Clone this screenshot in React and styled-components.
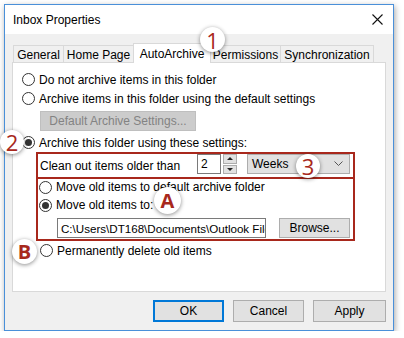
import React from "react"
import styled, { createGlobalStyle } from "styled-components"

const GlobalStyle = createGlobalStyle`
  html, body {
    margin: 0;
    padding: 0;
    background: #ffffff;
  }
  body {
    font-family: "Liberation Sans", Arial, sans-serif;
    font-size: 12px;
    color: #000;
  }
`

const RED = "#a8281c"

const Page = styled.div`
  padding: 4px 0 0 4px;
`

const Window = styled.div`
  position: relative;
  width: 388px;
  height: 325px;
  border: 1px solid #4a90d9;
  display: flex;
  flex-direction: column;
  box-shadow: 1px 2px 6px rgba(0, 0, 0, 0.35);
  background: #f0f0f0;
`

const TitleBar = styled.div`
  height: 29px;
  flex: none;
  background: #fff;
  display: flex;
  align-items: center;
  justify-content: space-between;
  padding: 0 10px 0 8px;
  font-size: 12px;
`

const CloseIcon = styled.svg`
  width: 11px;
  height: 11px;
  margin-top: -1px;
`

const Body = styled.div`
  flex: 1;
  display: flex;
  flex-direction: column;
  padding: 8px 7px 0 7px;
`

const TabStrip = styled.div`
  height: 20px;
  display: flex;
  align-items: flex-end;
  padding-left: 1px;
  position: relative;
  z-index: 1;
`

const Tab = styled.div`
  height: ${(p) => (p.$active ? "20px" : "17px")};
  margin-bottom: ${(p) => (p.$active ? "-1px" : "0")};
  width: ${(p) => p.$w}px;
  box-sizing: border-box;
  border: 1px solid #d9d9d9;
  border-bottom: none;
  margin-right: -1px;
  background: ${(p) => (p.$active ? "#fff" : "#f0f0f0")};
  display: flex;
  align-items: center;
  justify-content: center;
  padding-top: ${(p) => (p.$active ? "0" : "1px")};
`

const Panel = styled.div`
  height: 230px;
  box-sizing: border-box;
  background: #fff;
  border: 1px solid #d9d9d9;
  padding: 7px 0 0 9px;
  display: flex;
  flex-direction: column;
`

const RadioRow = styled.label`
  height: ${(p) => p.$h || 19}px;
  display: flex;
  align-items: center;
  gap: 4px;
  margin-left: ${(p) => p.$indent || 0}px;
`

const Radio = styled.span`
  width: 11px;
  height: 11px;
  border: 1px solid #333;
  border-radius: 50%;
  background: #fff;
  display: flex;
  align-items: center;
  justify-content: center;
  flex: none;

  &::after {
    content: "";
    display: ${(p) => (p.$checked ? "block" : "none")};
    width: 7px;
    height: 7px;
    border-radius: 50%;
    background: #333;
  }
`

const DisabledButton = styled.div`
  width: 156px;
  height: 20px;
  box-sizing: border-box;
  margin: 3px 0 2px 18px;
  background: #cccccc;
  border: 1px solid #bfbfbf;
  color: #838383;
  display: flex;
  align-items: center;
  justify-content: center;
`

const Group = styled.div`
  width: 319px;
  box-sizing: border-box;
  margin-left: 14px;
  border: 2px solid ${RED};
  margin-top: ${(p) => (p.$joined ? "-2px" : "0")};
`

const CleanRow = styled.div`
  height: 23px;
  display: flex;
  align-items: center;
  padding: 0 3px 0 2px;
`

const CleanLabel = styled.span`
  width: 157px;
`

const NumberBox = styled.div`
  width: 24px;
  height: 20px;
  box-sizing: border-box;
  border: 1px solid #7a7a7a;
  display: flex;
  align-items: center;
  padding-left: 3px;
  margin-top: -3px;
`

const Spinner = styled.div`
  width: 14px;
  height: 20px;
  margin: -3px 10px 0 2px;
  display: flex;
  flex-direction: column;
  gap: 1px;
`

const SpinBtn = styled.div`
  flex: 1;
  background: #e1e1e1;
  border: 1px solid #adadad;
  display: flex;
  align-items: center;
  justify-content: center;
`

const Triangle = styled.span`
  width: 0;
  height: 0;
  border-left: 3px solid transparent;
  border-right: 3px solid transparent;
  ${(p) =>
    p.$up ? "border-bottom: 3px solid #222;" : "border-top: 3px solid #222;"}
`

const Dropdown = styled.div`
  width: 103px;
  height: 20px;
  margin-top: -3px;
  box-sizing: border-box;
  background: #e1e1e1;
  border: 1px solid #adadad;
  display: flex;
  align-items: center;
  justify-content: space-between;
  padding: 0 6px 0 4px;
`

const MoveGroupBody = styled.div`
  padding: 0 3px 1px 1px;
  display: flex;
  flex-direction: column;
`

const PathRow = styled.div`
  display: flex;
  align-items: center;
  justify-content: space-between;
  padding-left: 18px;
  margin-top: 3px;
`

const PathBox = styled.div`
  width: 209px;
  height: 20px;
  box-sizing: border-box;
  border: 1px solid #7a7a7a;
  padding: 0 0 0 3px;
  display: flex;
  align-items: center;
  white-space: nowrap;
  overflow: hidden;
  font-size: 11.6px;
`

const Button = styled.div`
  width: ${(p) => p.$w || 71}px;
  height: ${(p) => p.$h || 22}px;
  box-sizing: border-box;
  background: #e1e1e1;
  border: ${(p) => (p.$default ? "2px solid #0078d7" : "1px solid #adadad")};
  display: flex;
  align-items: center;
  justify-content: center;
`

const Footer = styled.div`
  display: flex;
  justify-content: flex-end;
  gap: 9px;
  margin-top: 8px;
`

const Badge = styled.div`
  position: absolute;
  left: ${(p) => p.$x}px;
  top: ${(p) => p.$y}px;
  width: ${(p) => p.$d}px;
  height: ${(p) => p.$d}px;
  border-radius: 50%;
  background: #fff;
  box-shadow: 0 1px 4px rgba(0, 0, 0, 0.45);
  color: ${RED};
  font-family: "Open Sans", "Liberation Sans", sans-serif;
  font-size: ${(p) => (p.$bold ? "20px" : "22px")};
  font-weight: ${(p) => (p.$bold ? 700 : 400)};
  display: flex;
  align-items: center;
  justify-content: center;
  line-height: 1;
  z-index: 5;
`

const tabs = [
  { label: "General", w: 51 },
  { label: "Home Page", w: 71 },
  { label: "AutoArchive", w: 78, active: true },
  { label: "Permissions", w: 71 },
  { label: "Synchronization", w: 94 },
]

export default function App() {
  return (
    <Page>
      <GlobalStyle />
      <Window>
        <TitleBar>
          <span>Inbox Properties</span>
          <CloseIcon viewBox="0 0 11 11">
            <path d="M0.5 0.5 L10.5 10.5 M10.5 0.5 L0.5 10.5" stroke="#111" strokeWidth="1.1" />
          </CloseIcon>
        </TitleBar>
        <Body>
          <TabStrip>
            {tabs.map((t) => (
              <Tab key={t.label} $w={t.w} $active={t.active}>
                {t.label}
              </Tab>
            ))}
          </TabStrip>
          <Panel>
            <RadioRow>
              <Radio />
              Do not archive items in this folder
            </RadioRow>
            <RadioRow>
              <Radio />
              Archive items in this folder using the default settings
            </RadioRow>
            <DisabledButton>Default Archive Settings...</DisabledButton>
            <RadioRow>
              <Radio $checked />
              Archive this folder using these settings:
            </RadioRow>
            <Group>
              <CleanRow>
                <CleanLabel>Clean out items older than</CleanLabel>
                <NumberBox>2</NumberBox>
                <Spinner>
                  <SpinBtn>
                    <Triangle $up />
                  </SpinBtn>
                  <SpinBtn>
                    <Triangle />
                  </SpinBtn>
                </Spinner>
                <Dropdown>
                  <span>Weeks</span>
                  <svg width="9" height="6" viewBox="0 0 9 6">
                    <path d="M0.5 0.5 L4.5 4.5 L8.5 0.5" fill="none" stroke="#555" strokeWidth="1" />
                  </svg>
                </Dropdown>
              </CleanRow>
            </Group>
            <Group $joined>
              <MoveGroupBody>
                <RadioRow $h={16}>
                  <Radio />
                  Move old items to default archive folder
                </RadioRow>
                <RadioRow $h={20}>
                  <Radio $checked />
                  Move old items to:
                </RadioRow>
                <PathRow>
                  <PathBox>C:\Users\DT168\Documents\Outlook Files\archive.pst</PathBox>
                  <Button $w={71} $h={20}>Browse...</Button>
                </PathRow>
              </MoveGroupBody>
            </Group>
            <RadioRow $indent={18}>
              <Radio />
              Permanently delete old items
            </RadioRow>
          </Panel>
          <Footer>
            <Button $default>OK</Button>
            <Button>Cancel</Button>
            <Button $w={73}>Apply</Button>
          </Footer>
        </Body>
        <Badge $x={195} $y={22} $d={25}>1</Badge>
        <Badge $x={-5} $y={125} $d={24}>2</Badge>
        <Badge $x={291} $y={149} $d={24}>3</Badge>
        <Badge $x={149} $y={182} $d={27} $bold>A</Badge>
        <Badge $x={7} $y={234} $d={25} $bold>B</Badge>
      </Window>
    </Page>
  )
}
